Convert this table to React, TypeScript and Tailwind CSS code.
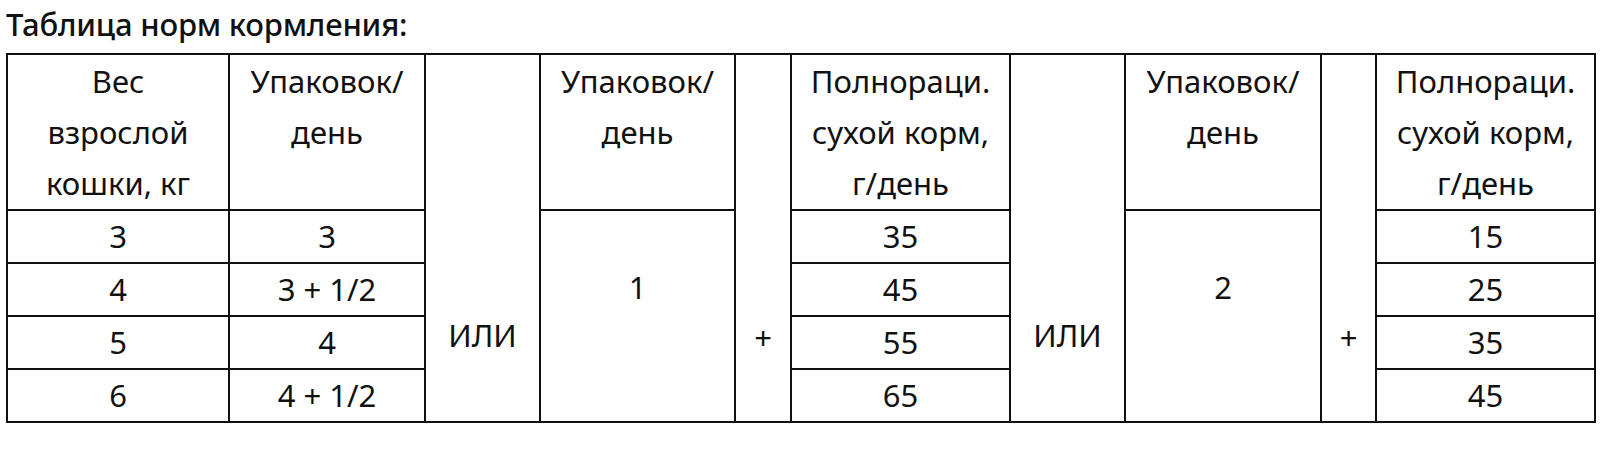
import React from "react";

const rows = [
  ["3", "3", "35", "15"],
  ["4", "3 + 1/2", "45", "25"],
  ["5", "4", "55", "35"],
  ["6", "4 + 1/2", "65", "45"],
];

const cell = "border-2 border-[#111] text-center p-0";

export default function App() {
  return (
    <div
      className="w-[1616px] h-[458px] bg-white text-[#111]"
      style={{ fontFamily: "'Noto Sans', 'Open Sans', sans-serif" }}
    >
      <h1 className="pl-[6px] pt-[4px] h-[53px] text-[31px] leading-[40px] font-medium tracking-[-0.2px]">
        Таблица норм кормления:
      </h1>
      <table className="ml-[6px] border-collapse table-fixed w-[1588px] text-[31px] leading-[51px]">
        <colgroup>
          <col className="w-[222px]" />
          <col className="w-[196px]" />
          <col className="w-[115px]" />
          <col className="w-[195px]" />
          <col className="w-[56px]" />
          <col className="w-[219px]" />
          <col className="w-[115px]" />
          <col className="w-[196px]" />
          <col className="w-[55px]" />
          <col className="w-[219px]" />
        </colgroup>
        <tbody>
          <tr className="h-[156px]">
            <td className={`${cell} align-top pt-[1px]`}>
              Вес
              <br />
              взрослой
              <br />
              кошки, кг
            </td>
            <td className={`${cell} align-top pt-[1px]`}>
              Упаковок/
              <br />
              день
            </td>
            <td rowSpan={5} className={`${cell} align-top pt-[255px]`}>
              ИЛИ
            </td>
            <td className={`${cell} align-top pt-[1px]`}>
              Упаковок/
              <br />
              день
            </td>
            <td rowSpan={5} className={`${cell} align-top pt-[257px]`}>
              +
            </td>
            <td className={`${cell} align-top pt-[1px]`}>
              Полнораци.
              <br />
              сухой корм,
              <br />
              г/день
            </td>
            <td rowSpan={5} className={`${cell} align-top pt-[255px]`}>
              ИЛИ
            </td>
            <td className={`${cell} align-top pt-[1px]`}>
              Упаковок/
              <br />
              день
            </td>
            <td rowSpan={5} className={`${cell} align-top pt-[257px]`}>
              +
            </td>
            <td className={`${cell} align-top pt-[1px]`}>
              Полнораци.
              <br />
              сухой корм,
              <br />
              г/день
            </td>
          </tr>
          {rows.map((r, i) => (
            <tr key={i} className="h-[52.75px]">
              <td className={`${cell} align-middle`}>{r[0]}</td>
              <td className={`${cell} align-middle`}>{r[1]}</td>
              {i === 0 && (
                <td rowSpan={4} className={`${cell} align-top pt-[51px]`}>
                  1
                </td>
              )}
              <td className={`${cell} align-middle`}>{r[2]}</td>
              {i === 0 && (
                <td rowSpan={4} className={`${cell} align-top pt-[51px]`}>
                  2
                </td>
              )}
              <td className={`${cell} align-middle`}>{r[3]}</td>
            </tr>
          ))}
        </tbody>
      </table>
    </div>
  );
}
